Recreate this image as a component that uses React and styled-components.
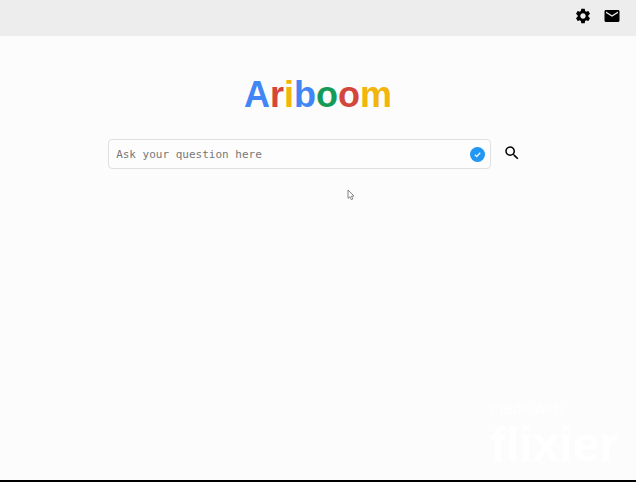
import { useState } from "react";
import styled, { createGlobalStyle } from "styled-components";
import { MdSettings, MdEmail, MdSearch } from "react-icons/md";

const letters = [
  { char: "A", color: "#4285f4" },
  { char: "r", color: "#d3463b" },
  { char: "i", color: "#f1b50b" },
  { char: "b", color: "#4285f4" },
  { char: "o", color: "#159b57" },
  { char: "o", color: "#d3463b" },
  { char: "m", color: "#f1b50b" },
];

export default function App() {
  const [question, setQuestion] = useState("");

  return (
    <Page>
      <GlobalStyle />
      <TopBar>
        <IconButton type="button" aria-label="Settings">
          <MdSettings size={18} />
        </IconButton>
        <IconButton type="button" aria-label="Messages">
          <MdEmail size={18} />
        </IconButton>
      </TopBar>
      <Main>
        <Logo>
          {letters.map((letter, i) => (
            <Letter key={i} $color={letter.color}>
              {letter.char}
            </Letter>
          ))}
        </Logo>
        <SearchForm onSubmit={(e) => e.preventDefault()}>
          <Field>
            <Question
              type="text"
              aria-label="Ask your question here"
              placeholder="Ask your question here"
              value={question}
              onChange={(e) => setQuestion(e.target.value)}
            />
            <Check viewBox="0 0 16 16" aria-hidden="true">
              <circle cx="8" cy="8" r="8" fill="#2196f3" />
              <path
                d="M5.2 8.2l2 1.9 3.7-4"
                fill="none"
                stroke="#e4f4ff"
                strokeWidth="1.5"
              />
            </Check>
          </Field>
          <IconButton type="submit" aria-label="Search">
            <MdSearch size={18} />
          </IconButton>
        </SearchForm>
      </Main>
      <Pointer viewBox="0 0 8 12" aria-hidden="true">
        <path
          d="M1 1v8.4l1.9-1.7 1.4 3 1.5-.7-1.3-2.9H7z"
          fill="#fff"
          stroke="#777"
          strokeWidth="0.9"
        />
      </Pointer>
      <Watermark>
        <small>made with</small>
        <strong>flixier</strong>
      </Watermark>
    </Page>
  );
}

const GlobalStyle = createGlobalStyle`
  * {
    box-sizing: border-box;
  }
  body {
    margin: 0;
    background: #fcfcfc;
    font-family: "Liberation Sans", Arial, sans-serif;
  }
`;

const Page = styled.div`
  position: relative;
  display: flex;
  flex-direction: column;
  min-height: 100vh;
  background: #fcfcfc;
  border-bottom: 2px solid #000;
`;

const TopBar = styled.header`
  display: flex;
  justify-content: flex-end;
  gap: 4px;
  height: 36px;
  padding: 2px 12px;
  background: #ededed;
`;

const IconButton = styled.button`
  display: flex;
  align-items: center;
  justify-content: center;
  width: 25px;
  height: 28px;
  padding: 0;
  border: none;
  background: none;
  color: #000;
  cursor: pointer;
`;

const Main = styled.main`
  display: flex;
  flex-direction: column;
  align-items: center;
  flex: 1;
  padding-top: 39px;
`;

const Logo = styled.h1`
  margin: 0 0 24px;
  font-size: 36px;
  line-height: 40px;
  font-weight: bold;
`;

const Letter = styled.span`
  color: ${(props) => props.$color};
`;

const SearchForm = styled.form`
  display: flex;
  align-items: flex-start;
  gap: 9px;
  width: 66%;
  padding-right: 3px;
`;

const Field = styled.div`
  display: flex;
  align-items: center;
  flex: 1;
  height: 30px;
  padding: 0 5px 0 7px;
  border: 1px solid #e0e0e0;
  border-radius: 4px;
  background: #fdfdfd;
`;

const Question = styled.input`
  flex: 1;
  min-width: 0;
  padding: 0;
  border: none;
  outline: none;
  background: transparent;
  font-family: "DejaVu Sans Mono", monospace;
  font-size: 11px;
  color: #333;
  &::placeholder {
    color: #777;
    opacity: 1;
  }
`;

const Check = styled.svg`
  width: 15px;
  height: 15px;
`;

const Pointer = styled.svg`
  position: absolute;
  top: 189px;
  left: 347px;
  width: 8px;
  height: 12px;
  pointer-events: none;
`;

const Watermark = styled.div`
  position: absolute;
  right: 18px;
  bottom: 8px;
  display: flex;
  flex-direction: column;
  color: #fff;
  font-family: "Liberation Sans", Arial, sans-serif;
  small {
    font-size: 16px;
    line-height: 18px;
  }
  strong {
    font-size: 48px;
    line-height: 54px;
    font-weight: bold;
  }
`;
